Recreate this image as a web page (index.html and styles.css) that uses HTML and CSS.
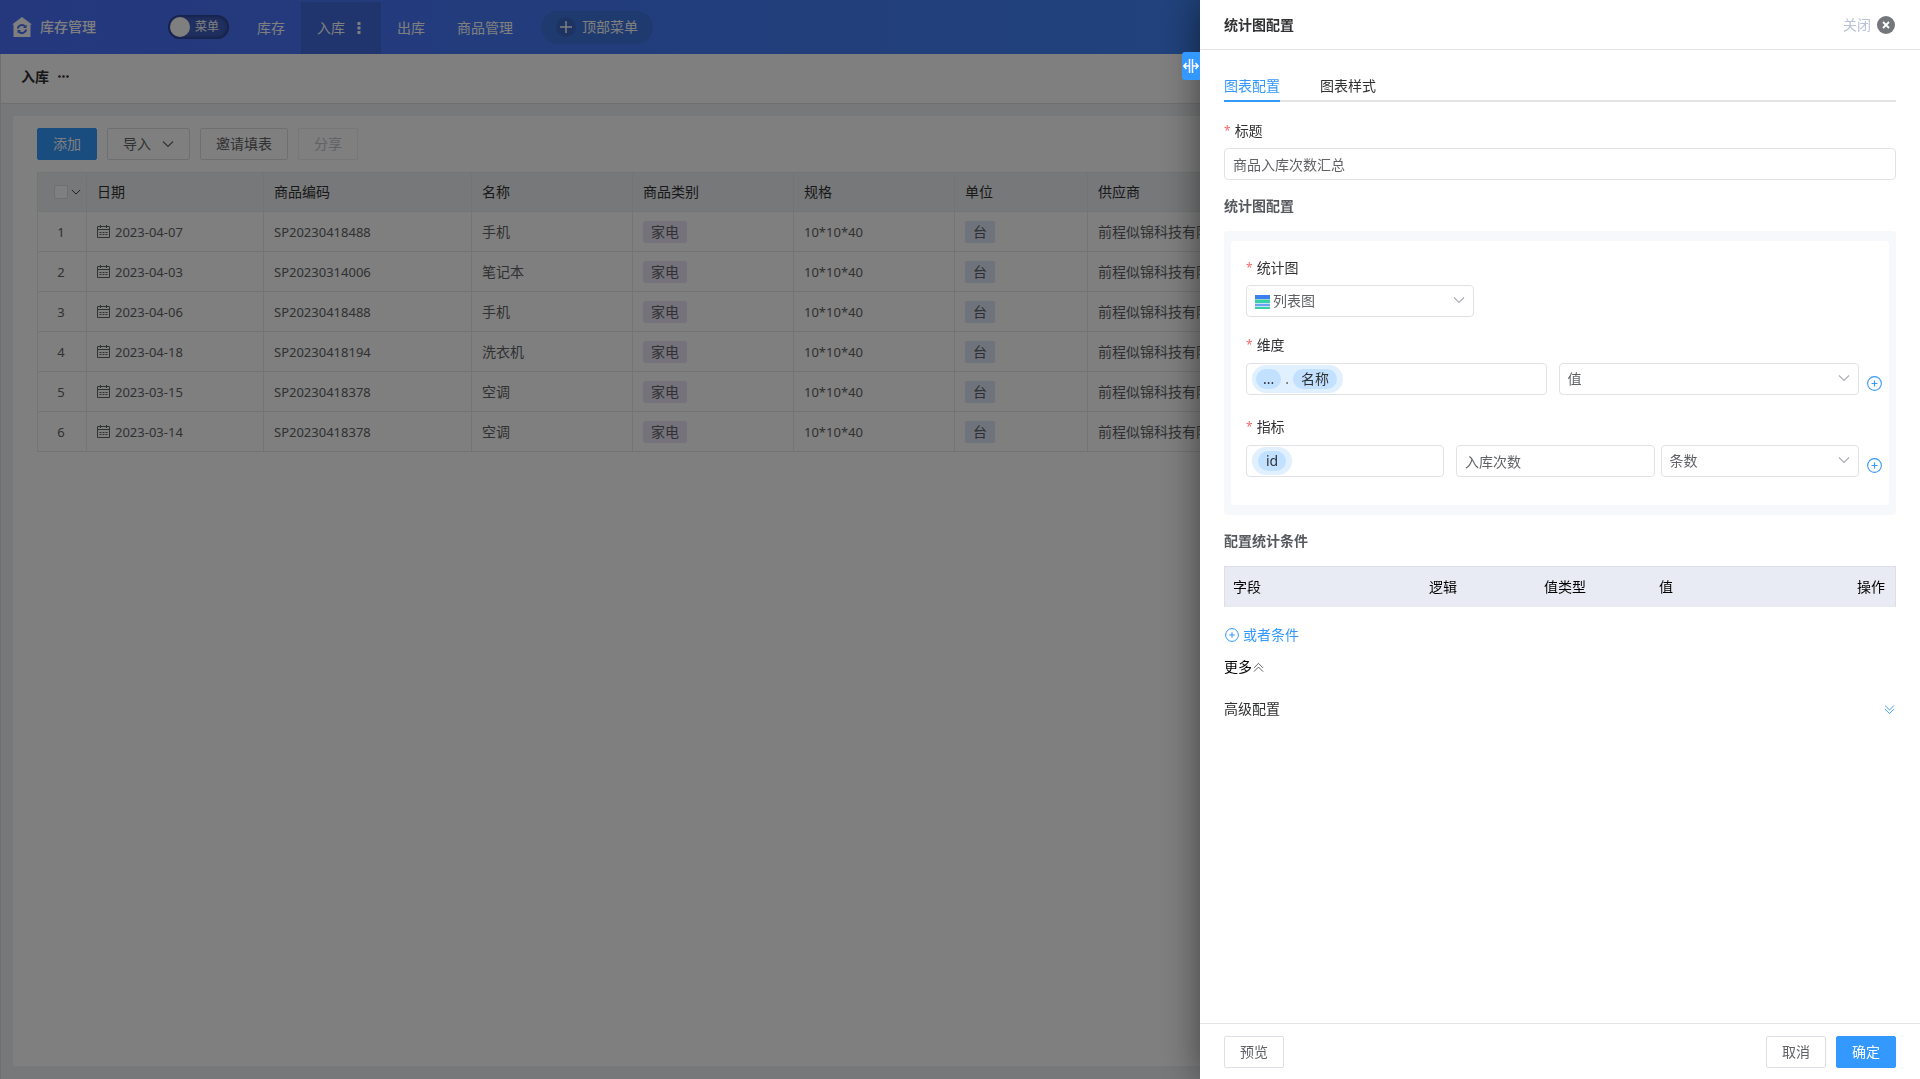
FILE: index.html
```html
<!DOCTYPE html>
<html lang="zh-CN">
<head>
<meta charset="utf-8">
<meta name="viewport" content="width=device-width, initial-scale=1">
<title>库存管理</title>
<link rel="stylesheet" href="styles.css">
</head>
<body>
<svg class="sprite" aria-hidden="true">
  <symbol id="i-down" viewBox="0 0 12 12"><path d="M1 3.5 6 8.5 11 3.5" fill="none" stroke="currentColor" stroke-width="1.1"/></symbol>
  <symbol id="i-cal" viewBox="0 0 13 13"><path d="M.5 1.5h12v11H.5zM.5 4.5h12M3.500 0v3M9.500 0v3" fill="none" stroke="currentColor"/><path d="M2.500 7.500h8M2.500 9.500h8" fill="none" stroke="currentColor" stroke-dasharray="2 1"/></symbol>
  <symbol id="i-plus-circle" viewBox="0 0 14 14"><circle cx="7" cy="7" r="6.400" fill="none" stroke="currentColor"/><path d="M4.200 7h5.600M7 4.200v5.600" stroke="currentColor" stroke-width="1.100"/></symbol>
  <symbol id="i-double" viewBox="0 0 12 12"><path d="M1 1.500 6 6.500 11 1.500M1 5.500 6 10.500 11 5.500" fill="none" stroke="currentColor"/></symbol>
</svg>

<div class="app">
  <header class="topbar">
    <a class="brand" href="#">
      <svg width="20" height="20" viewBox="0 0 20 20" aria-hidden="true"><path d="M10 0 20 7.500h-1.500V20h-17V7.500H0z" fill="#fff"/><path d="M5.800 11.500a4.200 4.200 0 0 1 7.200-2.200M14.200 12.500a4.200 4.200 0 0 1-7.200 2.200" fill="none" stroke="#4a70f5" stroke-width="2"/><path d="M14.500 7.500v3.500H11zM5.500 16.500V13H9z" fill="#4a70f5"/></svg>
      <span>库存管理</span>
    </a>
    <button class="menu-switch" type="button"><span class="knob"></span>菜单</button>
    <nav class="tabs">
      <a class="tab" href="#">库存</a>
      <a class="tab tab-active" href="#">入库
        <svg width="4" height="12" viewBox="0 0 4 12" fill="#fff" aria-hidden="true"><path d="M.5 0h3v3h-3zM.5 4.500h3v3h-3zM.5 9h3v3h-3z"/></svg>
      </a>
      <a class="tab" href="#">出库</a>
      <a class="tab" href="#">商品管理</a>
    </nav>
    <button class="add-menu" type="button">
      <span class="add-icon"><svg width="12" height="12" viewBox="0 0 12 12" aria-hidden="true"><path d="M0 6h12M6 0v12" stroke="#fff" stroke-width="1.500"/></svg></span>顶部菜单
    </button>
  </header>
  <div class="crumb">
    <h1>入库</h1>
    <svg width="11" height="3" viewBox="0 0 11 3" fill="#303133" aria-hidden="true"><circle cx="1.500" cy="1.500" r="1.300"/><circle cx="5.500" cy="1.500" r="1.300"/><circle cx="9.500" cy="1.500" r="1.300"/></svg>
  </div>
  <main class="main">
    <section class="card">
      <div class="toolbar">
        <button class="btn btn-primary" type="button">添加</button>
        <button class="btn" type="button">导入<svg width="12" height="12" aria-hidden="true"><use href="#i-down"/></svg></button>
        <button class="btn" type="button">邀请填表</button>
        <button class="btn" type="button" disabled>分享</button>
      </div>
      <table class="grid">
        <colgroup><col class="c-idx"><col class="c-date"><col class="c-code"><col class="c-mid"><col class="c-mid"><col class="c-mid"><col class="c-unit"><col></colgroup>
        <thead>
          <tr><th><span class="check"><input type="checkbox" aria-label="全选"><svg width="10" height="10" aria-hidden="true"><use href="#i-down"/></svg></span></th><th>日期</th><th>商品编码</th><th>名称</th><th>商品类别</th><th>规格</th><th>单位</th><th>供应商</th></tr>
        </thead>
        <tbody>
          <tr><td>1</td><td><span class="date"><svg width="13" height="13" aria-hidden="true"><use href="#i-cal"/></svg>2023-04-07</span></td><td>SP20230418488</td><td class="zh">手机</td><td><span class="tag">家电</span></td><td>10*10*40</td><td><span class="tag tag-blue">台</span></td><td class="zh">前程似锦科技有限公司</td></tr>
          <tr><td>2</td><td><span class="date"><svg width="13" height="13" aria-hidden="true"><use href="#i-cal"/></svg>2023-04-03</span></td><td>SP20230314006</td><td class="zh">笔记本</td><td><span class="tag">家电</span></td><td>10*10*40</td><td><span class="tag tag-blue">台</span></td><td class="zh">前程似锦科技有限公司</td></tr>
          <tr><td>3</td><td><span class="date"><svg width="13" height="13" aria-hidden="true"><use href="#i-cal"/></svg>2023-04-06</span></td><td>SP20230418488</td><td class="zh">手机</td><td><span class="tag">家电</span></td><td>10*10*40</td><td><span class="tag tag-blue">台</span></td><td class="zh">前程似锦科技有限公司</td></tr>
          <tr><td>4</td><td><span class="date"><svg width="13" height="13" aria-hidden="true"><use href="#i-cal"/></svg>2023-04-18</span></td><td>SP20230418194</td><td class="zh">洗衣机</td><td><span class="tag">家电</span></td><td>10*10*40</td><td><span class="tag tag-blue">台</span></td><td class="zh">前程似锦科技有限公司</td></tr>
          <tr><td>5</td><td><span class="date"><svg width="13" height="13" aria-hidden="true"><use href="#i-cal"/></svg>2023-03-15</span></td><td>SP20230418378</td><td class="zh">空调</td><td><span class="tag">家电</span></td><td>10*10*40</td><td><span class="tag tag-blue">台</span></td><td class="zh">前程似锦科技有限公司</td></tr>
          <tr><td>6</td><td><span class="date"><svg width="13" height="13" aria-hidden="true"><use href="#i-cal"/></svg>2023-03-14</span></td><td>SP20230418378</td><td class="zh">空调</td><td><span class="tag">家电</span></td><td>10*10*40</td><td><span class="tag tag-blue">台</span></td><td class="zh">前程似锦科技有限公司</td></tr>
        </tbody>
      </table>
    </section>
  </main>
</div>

<div class="mask"></div>

<aside class="drawer" aria-label="统计图配置">
  <button class="resizer" type="button" aria-label="调整宽度">
    <svg width="16" height="16" viewBox="0 0 16 16" fill="none" stroke="#fff" stroke-width="1.500" aria-hidden="true"><path d="M6.500 1v14M9.500 1v14M6 8H1M3.500 5 .8 8l2.700 3M10 8h5M12.500 5l2.700 3-2.700 3"/></svg>
  </button>
  <header class="drawer-head">
    <h2>统计图配置</h2>
    <button class="close" type="button">关闭
      <svg width="18" height="18" viewBox="0 0 18 18" aria-hidden="true"><circle cx="9" cy="9" r="9" fill="#73767a"/><path d="m6 6 6 6M12 6l-6 6" stroke="#fff" stroke-width="1.800"/></svg>
    </button>
  </header>
  <div class="drawer-body">
    <nav class="subtabs">
      <a class="subtab subtab-active" href="#">图表配置</a>
      <a class="subtab" href="#">图表样式</a>
    </nav>

    <label class="label" for="title">标题</label>
    <input class="control" id="title" type="text" value="商品入库次数汇总">

    <h3 class="section">统计图配置</h3>
    <div class="panel">
      <div class="panel-inner">
        <label class="label" for="chart">统计图</label>
        <div class="select chart-select">
          <select class="control has-icon" id="chart"><option>列表图</option></select>
          <svg class="chart-icon" width="15" height="14" viewBox="0 0 15 14" aria-hidden="true"><path d="M0 0h15v4H0z" fill="#3d7ff0"/><path d="M0 4h15v1H0z" fill="#8fdcc8"/><path d="M0 5h15v3H0z" fill="#38cfa5"/><path d="M0 8h15v1H0z" fill="#c5e4f5"/><path d="M0 9h15v2H0z" fill="#6ba0fb"/><path d="M0 11h15v1H0z" fill="#c5e4f5"/><path d="M0 12h15v2H0z" fill="#38cfa5"/></svg>
          <svg class="caret" width="12" height="12" aria-hidden="true"><use href="#i-down"/></svg>
        </div>

        <label class="label label-row" for="dim">维度</label>
        <div class="row">
          <div class="fields fields-wide">
            <div class="control tagbox">
              <span class="chip chip-path"><b>...</b><i>.</i><b>名称</b></span>
              <input id="dim" type="text">
            </div>
            <div class="select">
              <select class="control" aria-label="维度类型"><option>值</option></select>
              <svg class="caret" width="12" height="12" aria-hidden="true"><use href="#i-down"/></svg>
            </div>
          </div>
          <button class="add" type="button" aria-label="添加维度"><svg width="15" height="15" aria-hidden="true"><use href="#i-plus-circle"/></svg></button>
        </div>

        <label class="label label-row" for="metric">指标</label>
        <div class="row">
          <div class="fields fields-metric">
            <div class="control tagbox">
              <span class="chip"><b>id</b></span>
              <input id="metric" type="text">
            </div>
            <div class="fields fields-pair">
              <input class="control" type="text" value="入库次数" aria-label="指标名称">
              <div class="select">
                <select class="control" aria-label="统计方式"><option>条数</option></select>
                <svg class="caret" width="12" height="12" aria-hidden="true"><use href="#i-down"/></svg>
              </div>
            </div>
          </div>
          <button class="add" type="button" aria-label="添加指标"><svg width="15" height="15" aria-hidden="true"><use href="#i-plus-circle"/></svg></button>
        </div>
      </div>
    </div>

    <h3 class="section">配置统计条件</h3>
    <table class="conds">
      <thead><tr><th class="k-field">字段</th><th class="k-op">逻辑</th><th class="k-op">值类型</th><th>值</th><th class="k-act">操作</th></tr></thead>
    </table>
    <button class="link or-cond" type="button"><svg width="14" height="14" aria-hidden="true"><use href="#i-plus-circle"/></svg>或者条件</button>
    <button class="link more" type="button">更多<svg class="flip" width="11" height="11" aria-hidden="true"><use href="#i-double"/></svg></button>
    <button class="link advanced" type="button">高级配置<svg width="11" height="11" aria-hidden="true"><use href="#i-double"/></svg></button>
  </div>
  <footer class="drawer-foot">
    <button class="btn" type="button">预览</button>
    <div class="foot-right">
      <button class="btn" type="button">取消</button>
      <button class="btn btn-primary" type="button">确定</button>
    </div>
  </footer>
</aside>
</body>
</html>
```

FILE: styles.css
```css
* { box-sizing: border-box; }

body {
  margin: 0;
  font: 14px/20px "Noto Sans", "Noto Sans CJK SC", sans-serif;
  color: #303133;
}

h1, h2, h3 { margin: 0; font-size: 14px; line-height: 20px; }
a { color: inherit; text-decoration: none; }
button, input, select { font: inherit; color: inherit; margin: 0; }
button { border: 0; padding: 0; background: none; cursor: pointer; }
svg { flex: none; display: block; }
.sprite { display: none; }

/* application */
.app {
  min-height: 100vh;
  display: flex;
  flex-direction: column;
  background: #eef0f2;
}

.topbar {
  height: 54px;
  display: flex;
  align-items: center;
  color: #fff;
  background: linear-gradient(90deg, #4a70fa 0, #4284f8 60%, #3690f0 100%);
}

.brand {
  width: 168px;
  padding-left: 12px;
  display: flex;
  align-items: center;
  gap: 8px;
  font-weight: 500;
}

.menu-switch {
  width: 61px;
  height: 24px;
  margin-right: 12px;
  padding: 0 2px;
  display: flex;
  align-items: center;
  gap: 5px;
  border-radius: 12px;
  font-size: 12px;
  background: #3f5fc0;
  box-shadow: inset 0 0 4px 1px #22357c;
}

.knob { width: 20px; height: 20px; border-radius: 50%; background: #fff; }

.tabs { display: flex; align-self: stretch; padding-top: 2px; }
.tab { padding: 0 16px; display: flex; align-items: center; }
.tab-active { width: 80px; gap: 12px; background: #4068da; }

.add-menu {
  height: 33px;
  margin: 0 12px;
  padding: 0 15px;
  display: flex;
  align-items: center;
  gap: 6px;
  border-radius: 17px;
  background: #3f74de;
}

.add-icon {
  width: 20px;
  height: 20px;
  display: grid;
  place-items: center;
  border-radius: 50%;
  background: #3b67c8;
}

.crumb {
  height: 50px;
  padding: 0 20px 4px;
  display: flex;
  align-items: center;
  gap: 9px;
  background: #fff;
  border: solid #dcdfe6;
  border-width: 0 0 1px 1px;
}

.main { flex: 1; display: flex; padding: 12px 12px 13px; border-left: 1px solid #dcdfe6; }
.card { flex: 1; min-width: 0; padding: 12px 24px; background: #fff; }
.toolbar { display: flex; gap: 10px; margin-bottom: 12px; }

.btn {
  height: 32px;
  padding: 0 15px;
  display: flex;
  align-items: center;
  gap: 11px;
  color: #606266;
  background: #fff;
  border: 1px solid #dcdfe6;
  border-radius: 2px;
}
.btn-primary { color: #fff; background: #3398ff; border-color: #3398ff; }
.btn:disabled { color: #c0c4cc; border-color: #ebeef5; }

.grid {
  width: 100%;
  table-layout: fixed;
  border: solid #e6e8eb;
  border-width: 1px 0 0 1px;
  border-spacing: 0;
  color: #606266;
}
.grid th, .grid td {
  height: 40px;
  padding: 0 10px;
  border: solid #e6e8eb;
  border-width: 0 1px 1px 0;
  text-align: left;
  white-space: nowrap;
  overflow: hidden;
}
.grid th { height: 39px; font-weight: 400; color: #303133; background: #eef0f2; }
.grid td { font-size: 13px; }
.grid .zh { font-size: 14px; }
.grid td:first-child { padding: 0 2px 0 0; text-align: center; }
.grid th:first-child { padding: 0; }
.c-idx { width: 49px; }
.c-date { width: 177px; }
.c-code { width: 208px; }
.c-mid { width: 161px; }
.c-unit { width: 133px; }

.check { display: flex; align-items: center; gap: 3px; padding-left: 16px; }
.check input {
  appearance: none;
  width: 14px;
  height: 14px;
  border: 1px solid #dcdfe6;
  border-radius: 2px;
  background: #fff;
}

.date { display: flex; align-items: center; gap: 5px; }
.tag {
  display: inline-block;
  padding: 0 8px;
  line-height: 22px;
  font-size: 14px;
  border-radius: 2px;
  background: #ebe4f6;
}
.tag-blue { background: #dfe6f7; }

.mask { position: fixed; inset: 0; background: rgba(0, 0, 0, .5); }

/* drawer */
.drawer {
  position: fixed;
  inset: 0 0 0 auto;
  width: 37.5%;
  display: flex;
  flex-direction: column;
  background: #fff;
  box-shadow: 0 0 36px rgba(0, 0, 0, .5);
}

.resizer {
  position: absolute;
  top: 52px;
  right: 100%;
  width: 18px;
  height: 28px;
  display: grid;
  place-items: center;
  border-radius: 3px 0 0 3px;
  background: #3398ff;
}

.drawer-head {
  height: 50px;
  padding: 0 25px 0 24px;
  display: flex;
  align-items: center;
  justify-content: space-between;
  border-bottom: 1px solid #e4e4e6;
}
.close { display: flex; align-items: center; gap: 6px; color: #b8c2d6; }

.drawer-body { flex: 1; padding: 26px 24px 0; overflow: auto; }

.subtabs {
  display: flex;
  gap: 40px;
  margin-bottom: 19px;
  border-bottom: 2px solid #e4e4e6;
}
.subtab { padding-bottom: 4px; margin-bottom: -2px; border-bottom: 2px solid transparent; }
.subtab-active { color: #3398ff; border-color: #3398ff; }

.label { display: flex; gap: 4px; margin-bottom: 7px; }
.label::before { content: "*"; font-size: 12px; color: #f56c6c; }

.control {
  display: block;
  width: 100%;
  height: 32px;
  padding: 0 8px;
  color: #606266;
  background: #fff;
  border: 1px solid #e0e2e6;
  border-radius: 4px;
}

.section { margin: 16px 0 15px; color: #55585c; }

.panel { padding: 10px 7px; border-radius: 4px; background: #f6f8fc; }
.panel-inner { padding: 17px 0 28px 15px; border-radius: 4px; background: #fff; }
.label-row { margin: 18px 0 8px; }

.select { position: relative; }
.select select { appearance: none; }
.select .has-icon { padding-left: 26px; }
.chart-select { width: 228px; }
.caret { position: absolute; right: 9px; top: 9px; color: #a8abb2; pointer-events: none; }
.chart-icon { position: absolute; left: 9px; top: 10px; pointer-events: none; }

.row { display: flex; margin-bottom: 22px; }
.row:last-child { margin-bottom: 0; }
.fields { flex: 1; min-width: 0; display: grid; gap: 12px; }
.fields-wide { grid-template-columns: 1fr 1fr; }
.fields-metric { grid-template-columns: 198px 1fr; }
.fields-pair { grid-template-columns: 1fr 1fr; gap: 6px; }
.add { width: 30px; padding: 9px 0 0 8px; color: #3398ff; }

.tagbox { display: flex; align-items: center; padding: 0 5px; }
.tagbox input { flex: 1; min-width: 0; border: 0; outline: 0; background: none; }
.chip {
  height: 28px;
  padding: 0 6px;
  display: flex;
  align-items: center;
  gap: 4px;
  border-radius: 14px;
  background: #e0f0ff;
}
.chip-path { padding: 0 6px 0 4px; }
.chip b {
  padding: 0 8px;
  font-weight: 400;
  color: #303133;
  border-radius: 10px;
  background: #c2e0ff;
}
.chip b:first-child:not(:last-child) { padding: 0 7px; }
.chip i { font-style: normal; }

.conds {
  width: 100%;
  margin-bottom: 18px;
  table-layout: fixed;
  border: solid #dcdfe6;
  border-width: 1px 1px 0;
  border-spacing: 0;
  background: #e8ebf3;
}
.conds th {
  height: 40px;
  padding: 0 8px;
  font-weight: 400;
  text-align: left;
  white-space: nowrap;
  color: #000;
}
.k-field { width: 196px; }
.k-op { width: 115px; }
.conds .k-act { width: 46px; }

.link { display: flex; align-items: center; }
.or-cond { gap: 4px; margin-bottom: 12px; padding-left: 1px; color: #3398ff; }
.more { gap: 1px; margin-bottom: 22px; color: #000; }
.more svg { color: #55585c; }
.flip { transform: rotate(180deg); }
.advanced { width: 100%; padding-right: 1px; justify-content: space-between; }
.advanced svg { color: #3398ff; }

.drawer-foot {
  padding: 12px 24px 11px;
  display: flex;
  justify-content: space-between;
  border-top: 1px solid #e4e4e6;
}
.foot-right { display: flex; gap: 10px; }
```
